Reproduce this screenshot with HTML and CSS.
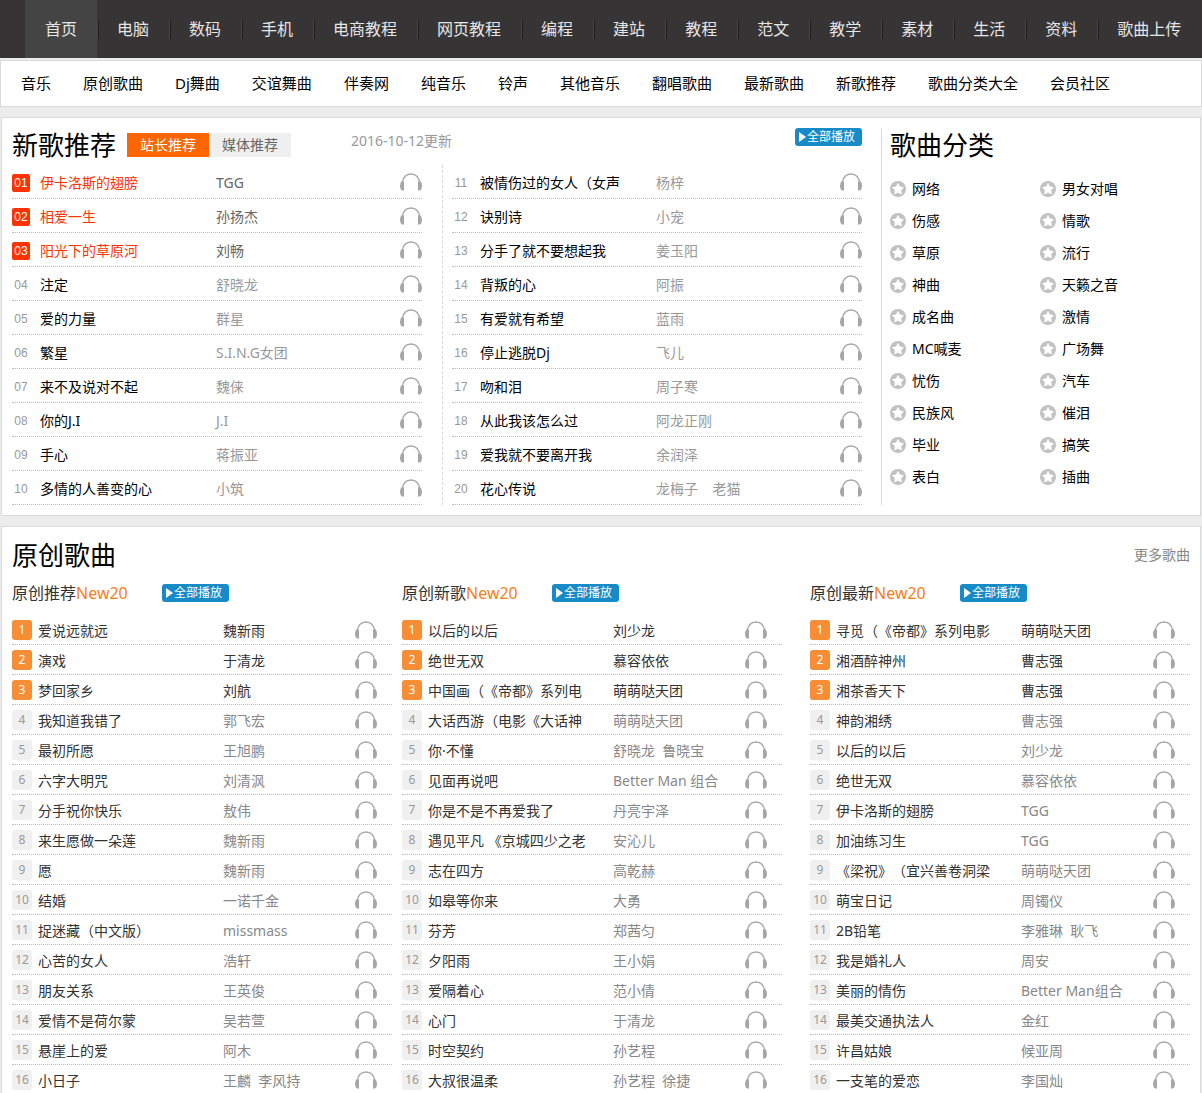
FILE: index.html
```html
<!DOCTYPE html>
<html lang="zh-CN">
<head>
    <meta charset="utf-8">
    <title>新歌推荐</title>
    <link rel="stylesheet" href="styles.css">
</head>
<body>

<!-- shared icons -->
<svg class="sprite" aria-hidden="true">
    <symbol id="ear" viewBox="0 0 22 18">
        <path d="M2.500 10C2.500 4.500 6 1 11 1S19.500 4.500 19.500 10" fill="none" stroke="#a8a8a8" stroke-width="1.400"/>
        <path d="M1.800 8H3.200Q4 8.500 4 10V17.500H2Q0 16.500 0 13Q0 9.500 1.800 8zM20.200 8H18.800Q18 8.500 18 10V17.500H20Q22 16.500 22 13Q22 9.500 20.200 8z" fill="#a6a6a6"/>
    </symbol>
    <symbol id="star" viewBox="0 0 16 16">
        <circle cx="8" cy="8" r="8" fill="#c1c1c1"/>
        <path d="M8 1.800L9.900 5.600L14 6.200L11.200 9.200L11.900 13.500L8 11.700L4.100 13.500L4.800 9.200L2 6.200L6.100 5.600z" fill="#fff"/>
    </symbol>
    <symbol id="play" viewBox="0 0 7 10">
        <path d="M0 0L7 5L0 10z" fill="#fff"/>
    </symbol>
</svg>

<nav class="topnav">
    <a class="on" href="#">首页</a>
    <a href="#">电脑</a>
    <a href="#">数码</a>
    <a href="#">手机</a>
    <a href="#">电商教程</a>
    <a href="#">网页教程</a>
    <a href="#">编程</a>
    <a href="#">建站</a>
    <a href="#">教程</a>
    <a href="#">范文</a>
    <a href="#">教学</a>
    <a href="#">素材</a>
    <a href="#">生活</a>
    <a href="#">资料</a>
    <a href="#">歌曲上传</a>
</nav>

<nav class="subnav">
    <a href="#">音乐</a>
    <a href="#">原创歌曲</a>
    <a href="#">Dj舞曲</a>
    <a href="#">交谊舞曲</a>
    <a href="#">伴奏网</a>
    <a href="#">纯音乐</a>
    <a href="#">铃声</a>
    <a href="#">其他音乐</a>
    <a href="#">翻唱歌曲</a>
    <a href="#">最新歌曲</a>
    <a href="#">新歌推荐</a>
    <a href="#">歌曲分类大全</a>
    <a href="#">会员社区</a>
</nav>

<!-- 新歌推荐 -->
<section class="panel newsong">
    <div class="newsong-main">
        <div class="newsong-head">
            <h2>新歌推荐</h2>
            <div class="tabs">
                <button class="on" type="button">站长推荐</button>
                <button type="button">媒体推荐</button>
            </div>
            <span class="date">2016-10-12更新</span>
            <button class="playall" type="button"><svg><use href="#play"/></svg>全部播放</button>
        </div>
        <div class="newsong-lists">
            <ul class="songs">
                <li class="top"><i>01</i><a href="#">伊卡洛斯的翅膀</a><span>TGG</span><svg><use href="#ear"/></svg></li>
                <li class="top"><i>02</i><a href="#">相爱一生</a><span>孙扬杰</span><svg><use href="#ear"/></svg></li>
                <li class="top"><i>03</i><a href="#">阳光下的草原河</a><span>刘畅</span><svg><use href="#ear"/></svg></li>
                <li><i>04</i><a href="#">注定</a><span>舒晓龙</span><svg><use href="#ear"/></svg></li>
                <li><i>05</i><a href="#">爱的力量</a><span>群星</span><svg><use href="#ear"/></svg></li>
                <li><i>06</i><a href="#">繁星</a><span>S.I.N.G女团</span><svg><use href="#ear"/></svg></li>
                <li><i>07</i><a href="#">来不及说对不起</a><span>魏俫</span><svg><use href="#ear"/></svg></li>
                <li><i>08</i><a href="#">你的J.I</a><span>J.I</span><svg><use href="#ear"/></svg></li>
                <li><i>09</i><a href="#">手心</a><span>蒋振亚</span><svg><use href="#ear"/></svg></li>
                <li><i>10</i><a href="#">多情的人善变的心</a><span>小筑</span><svg><use href="#ear"/></svg></li>
            </ul>
            <ul class="songs">
                <li><i>11</i><a href="#">被情伤过的女人（女声</a><span>杨梓</span><svg><use href="#ear"/></svg></li>
                <li><i>12</i><a href="#">诀别诗</a><span>小宠</span><svg><use href="#ear"/></svg></li>
                <li><i>13</i><a href="#">分手了就不要想起我</a><span>姜玉阳</span><svg><use href="#ear"/></svg></li>
                <li><i>14</i><a href="#">背叛的心</a><span>阿振</span><svg><use href="#ear"/></svg></li>
                <li><i>15</i><a href="#">有爱就有希望</a><span>蓝雨</span><svg><use href="#ear"/></svg></li>
                <li><i>16</i><a href="#">停止逃脱Dj</a><span>飞儿</span><svg><use href="#ear"/></svg></li>
                <li><i>17</i><a href="#">吻和泪</a><span>周子寒</span><svg><use href="#ear"/></svg></li>
                <li><i>18</i><a href="#">从此我该怎么过</a><span>阿龙正刚</span><svg><use href="#ear"/></svg></li>
                <li><i>19</i><a href="#">爱我就不要离开我</a><span>余润泽</span><svg><use href="#ear"/></svg></li>
                <li><i>20</i><a href="#">花心传说</a><span>龙梅子&nbsp;&nbsp;&nbsp;&nbsp;老猫</span><svg><use href="#ear"/></svg></li>
            </ul>
        </div>
    </div>
    <aside class="sorts">
        <h2>歌曲分类</h2>
        <ul>
            <li><a href="#"><svg><use href="#star"/></svg>网络</a></li>
            <li><a href="#"><svg><use href="#star"/></svg>男女对唱</a></li>
            <li><a href="#"><svg><use href="#star"/></svg>伤感</a></li>
            <li><a href="#"><svg><use href="#star"/></svg>情歌</a></li>
            <li><a href="#"><svg><use href="#star"/></svg>草原</a></li>
            <li><a href="#"><svg><use href="#star"/></svg>流行</a></li>
            <li><a href="#"><svg><use href="#star"/></svg>神曲</a></li>
            <li><a href="#"><svg><use href="#star"/></svg>天籁之音</a></li>
            <li><a href="#"><svg><use href="#star"/></svg>成名曲</a></li>
            <li><a href="#"><svg><use href="#star"/></svg>激情</a></li>
            <li><a href="#"><svg><use href="#star"/></svg>MC喊麦</a></li>
            <li><a href="#"><svg><use href="#star"/></svg>广场舞</a></li>
            <li><a href="#"><svg><use href="#star"/></svg>忧伤</a></li>
            <li><a href="#"><svg><use href="#star"/></svg>汽车</a></li>
            <li><a href="#"><svg><use href="#star"/></svg>民族风</a></li>
            <li><a href="#"><svg><use href="#star"/></svg>催泪</a></li>
            <li><a href="#"><svg><use href="#star"/></svg>毕业</a></li>
            <li><a href="#"><svg><use href="#star"/></svg>搞笑</a></li>
            <li><a href="#"><svg><use href="#star"/></svg>表白</a></li>
            <li><a href="#"><svg><use href="#star"/></svg>插曲</a></li>
        </ul>
    </aside>
</section>

<!-- 原创歌曲 -->
<section class="panel original">
    <div class="original-head">
        <h2>原创歌曲</h2>
        <a href="#">更多歌曲</a>
    </div>
    <div class="original-cols">
        <div class="col">
            <div class="col-head">
                <h3>原创推荐<em>New20</em></h3>
                <button class="playall" type="button"><svg><use href="#play"/></svg>全部播放</button>
            </div>
            <ul class="songs small">
                <li class="top"><i>1</i><a href="#">爱说远就远</a><span>魏新雨</span><svg><use href="#ear"/></svg></li>
                <li class="top"><i>2</i><a href="#">演戏</a><span>于清龙</span><svg><use href="#ear"/></svg></li>
                <li class="top"><i>3</i><a href="#">梦回家乡</a><span>刘航</span><svg><use href="#ear"/></svg></li>
                <li><i>4</i><a href="#">我知道我错了</a><span>郭飞宏</span><svg><use href="#ear"/></svg></li>
                <li><i>5</i><a href="#">最初所愿</a><span>王旭鹏</span><svg><use href="#ear"/></svg></li>
                <li><i>6</i><a href="#">六字大明咒</a><span>刘清沨</span><svg><use href="#ear"/></svg></li>
                <li><i>7</i><a href="#">分手祝你快乐</a><span>敖伟</span><svg><use href="#ear"/></svg></li>
                <li><i>8</i><a href="#">来生愿做一朵莲</a><span>魏新雨</span><svg><use href="#ear"/></svg></li>
                <li><i>9</i><a href="#">愿</a><span>魏新雨</span><svg><use href="#ear"/></svg></li>
                <li><i>10</i><a href="#">结婚</a><span>一诺千金</span><svg><use href="#ear"/></svg></li>
                <li><i>11</i><a href="#">捉迷藏（中文版）</a><span>missmass</span><svg><use href="#ear"/></svg></li>
                <li><i>12</i><a href="#">心苦的女人</a><span>浩轩</span><svg><use href="#ear"/></svg></li>
                <li><i>13</i><a href="#">朋友关系</a><span>王英俊</span><svg><use href="#ear"/></svg></li>
                <li><i>14</i><a href="#">爱情不是荷尔蒙</a><span>吴若萱</span><svg><use href="#ear"/></svg></li>
                <li><i>15</i><a href="#">悬崖上的爱</a><span>阿木</span><svg><use href="#ear"/></svg></li>
                <li><i>16</i><a href="#">小日子</a><span>王麟&nbsp;&nbsp;李风持</span><svg><use href="#ear"/></svg></li>
            </ul>
        </div>
        <div class="col">
            <div class="col-head">
                <h3>原创新歌<em>New20</em></h3>
                <button class="playall" type="button"><svg><use href="#play"/></svg>全部播放</button>
            </div>
            <ul class="songs small">
                <li class="top"><i>1</i><a href="#">以后的以后</a><span>刘少龙</span><svg><use href="#ear"/></svg></li>
                <li class="top"><i>2</i><a href="#">绝世无双</a><span>慕容依依</span><svg><use href="#ear"/></svg></li>
                <li class="top"><i>3</i><a href="#">中国画（《帝都》系列电</a><span>萌萌哒天团</span><svg><use href="#ear"/></svg></li>
                <li><i>4</i><a href="#">大话西游（电影《大话神</a><span>萌萌哒天团</span><svg><use href="#ear"/></svg></li>
                <li><i>5</i><a href="#">你·不懂</a><span>舒晓龙&nbsp;&nbsp;鲁晓宝</span><svg><use href="#ear"/></svg></li>
                <li><i>6</i><a href="#">见面再说吧</a><span>Better Man 组合</span><svg><use href="#ear"/></svg></li>
                <li><i>7</i><a href="#">你是不是不再爱我了</a><span>丹亮宇泽</span><svg><use href="#ear"/></svg></li>
                <li><i>8</i><a href="#">遇见平凡 《京城四少之老</a><span>安沁儿</span><svg><use href="#ear"/></svg></li>
                <li><i>9</i><a href="#">志在四方</a><span>高乾赫</span><svg><use href="#ear"/></svg></li>
                <li><i>10</i><a href="#">如皋等你来</a><span>大勇</span><svg><use href="#ear"/></svg></li>
                <li><i>11</i><a href="#">芬芳</a><span>郑茜匀</span><svg><use href="#ear"/></svg></li>
                <li><i>12</i><a href="#">夕阳雨</a><span>王小娟</span><svg><use href="#ear"/></svg></li>
                <li><i>13</i><a href="#">爱隔着心</a><span>范小倩</span><svg><use href="#ear"/></svg></li>
                <li><i>14</i><a href="#">心门</a><span>于清龙</span><svg><use href="#ear"/></svg></li>
                <li><i>15</i><a href="#">时空契约</a><span>孙艺程</span><svg><use href="#ear"/></svg></li>
                <li><i>16</i><a href="#">大叔很温柔</a><span>孙艺程&nbsp;&nbsp;徐捷</span><svg><use href="#ear"/></svg></li>
            </ul>
        </div>
        <div class="col">
            <div class="col-head">
                <h3>原创最新<em>New20</em></h3>
                <button class="playall" type="button"><svg><use href="#play"/></svg>全部播放</button>
            </div>
            <ul class="songs small">
                <li class="top"><i>1</i><a href="#">寻觅（《帝都》系列电影</a><span>萌萌哒天团</span><svg><use href="#ear"/></svg></li>
                <li class="top"><i>2</i><a href="#">湘酒醉神州</a><span>曹志强</span><svg><use href="#ear"/></svg></li>
                <li class="top"><i>3</i><a href="#">湘茶香天下</a><span>曹志强</span><svg><use href="#ear"/></svg></li>
                <li><i>4</i><a href="#">神韵湘绣</a><span>曹志强</span><svg><use href="#ear"/></svg></li>
                <li><i>5</i><a href="#">以后的以后</a><span>刘少龙</span><svg><use href="#ear"/></svg></li>
                <li><i>6</i><a href="#">绝世无双</a><span>慕容依依</span><svg><use href="#ear"/></svg></li>
                <li><i>7</i><a href="#">伊卡洛斯的翅膀</a><span>TGG</span><svg><use href="#ear"/></svg></li>
                <li><i>8</i><a href="#">加油练习生</a><span>TGG</span><svg><use href="#ear"/></svg></li>
                <li><i>9</i><a href="#">《梁祝》（宜兴善卷洞梁</a><span>萌萌哒天团</span><svg><use href="#ear"/></svg></li>
                <li><i>10</i><a href="#">萌宝日记</a><span>周镯仪</span><svg><use href="#ear"/></svg></li>
                <li><i>11</i><a href="#">2B铅笔</a><span>李雅琳&nbsp;&nbsp;耿飞</span><svg><use href="#ear"/></svg></li>
                <li><i>12</i><a href="#">我是婚礼人</a><span>周安</span><svg><use href="#ear"/></svg></li>
                <li><i>13</i><a href="#">美丽的情伤</a><span>Better Man组合</span><svg><use href="#ear"/></svg></li>
                <li><i>14</i><a href="#">最美交通执法人</a><span>金红</span><svg><use href="#ear"/></svg></li>
                <li><i>15</i><a href="#">许昌姑娘</a><span>候亚周</span><svg><use href="#ear"/></svg></li>
                <li><i>16</i><a href="#">一支笔的爱恋</a><span>李国灿</span><svg><use href="#ear"/></svg></li>
            </ul>
        </div>
    </div>
</section>

</body>
</html>
```

FILE: styles.css
```css
* {
    box-sizing: border-box;
    margin: 0;
    padding: 0;
}

body {
    font: 14px/20px "Noto Sans", "Noto Sans CJK SC", sans-serif;
    text-spacing-trim: space-all;
    background: #ececec;
    color: #000;
}

a {
    color: inherit;
    text-decoration: none;
}

ul {
    list-style: none;
}

i, em {
    font-style: normal;
}

button {
    border: 0;
    font-family: inherit;
    cursor: pointer;
}

h2 {
    font-size: 26px;
    font-weight: normal;
    line-height: 34px;
}

.sprite {
    display: none;
}

/* top bar */
.topnav {
    display: flex;
    height: 58px;
    padding-left: 25px;
    background: #373435;
    white-space: nowrap;
}

.topnav a {
    padding: 0 20px;
    font-size: 16px;
    line-height: 58px;
    color: #e6e6e6;
    background: linear-gradient(90deg, #454344 1px, #1e1c1d 1px) no-repeat 0 20px / 2px 19px;
}

.topnav a.on {
    background: #444;
}

.subnav {
    display: flex;
    gap: 32px;
    margin-top: 2px;
    padding: 0 20px;
    border: 1px solid #d9d9d9;
    background: #fff;
    font-size: 15px;
    line-height: 45px;
    white-space: nowrap;
}

.panel {
    margin: 10px 1px 0;
    padding: 10px;
    border: 1px solid #d9d9d9;
    background: #fff;
}

.playall {
    display: flex;
    align-items: center;
    gap: 1px;
    width: 67px;
    height: 18px;
    padding-left: 4px;
    border-radius: 3px;
    background: #168bc8;
    color: #fff;
    font-size: 12px;
    line-height: 18px;
    white-space: nowrap;
}

.playall svg {
    width: 7px;
    height: 10px;
}

/* new songs */
.newsong {
    display: flex;
}

.newsong-main {
    flex: 1;
    padding-right: 19px;
    border-right: 1px solid #d9d9d9;
}

.newsong-head {
    display: flex;
    align-items: flex-start;
    height: 37px;
}

.tabs {
    display: flex;
    margin: 5px 60px 0 11px;
}

.tabs button {
    width: 82px;
    height: 24px;
    background: #efefef;
    color: #666;
    font-size: 14px;
    line-height: 24px;
}

.tabs button.on {
    background: #f60;
    color: #fff;
}

.date {
    padding-top: 3px;
    color: #999;
}

.newsong-head .playall {
    margin-left: auto;
}

.newsong-lists {
    display: flex;
}

.newsong-lists .songs {
    flex: 1;
}

.newsong-lists .songs + .songs {
    margin-left: 20px;
    padding-left: 9px;
    border-left: 1px dashed #d9d9d9;
}

.songs li {
    display: grid;
    grid-template-columns: 18px 166px 1fr 22px;
    column-gap: 10px;
    align-items: center;
    height: 34px;
    padding-top: 2px;
    border-bottom: 1px dotted #bbb;
    white-space: nowrap;
}

.songs i {
    height: 18px;
    border-radius: 2px;
    color: #999;
    font: 12px/18px "Liberation Sans", sans-serif;
    text-align: center;
}

.songs span {
    color: #999;
}

.songs svg {
    width: 22px;
    height: 18px;
    margin-bottom: 2px;
}

.songs .top i {
    background: #ff3301;
    color: #fff;
}

.songs .top a {
    color: #ff3301;
}

.songs .top span {
    color: #666;
}

/* song types */
.sorts {
    width: 308px;
    padding-left: 8px;
}

.sorts ul {
    display: grid;
    grid-template-columns: 1fr 1fr;
    margin-top: 11px;
}

.sorts a {
    display: flex;
    align-items: center;
    gap: 6px;
    height: 32px;
}

.sorts svg {
    width: 16px;
    height: 16px;
}

/* original songs */
.original-head {
    display: flex;
    justify-content: space-between;
    align-items: center;
    height: 36px;
}

.original-head a {
    color: #888;
}

.original-cols {
    display: flex;
    gap: 10px;
}

.col {
    flex: 1;
}

.col:last-child {
    margin-left: 18px;
}

.col-head {
    display: flex;
    align-items: center;
    height: 40px;
    margin-bottom: 2px;
}

.col-head h3 {
    width: 150px;
    color: #333;
    font-size: 16px;
    font-weight: normal;
}

.col-head em {
    color: #f57f17;
}

.small li {
    grid-template-columns: 20px 179px 1fr 22px;
    column-gap: 6px;
    height: 30px;
    padding: 1px 15px 0 0;
}

.small i {
    height: 20px;
    border-radius: 3px;
    background: #f0f0f0;
    font: 12px/20px "Noto Sans", sans-serif;
}

.small a, .small span {
    padding-top: 2px;
}

.small a {
    color: #333;
}

.small span {
    color: #888;
}

.small svg {
    margin-bottom: 0;
}

.small .top i {
    background: #f78d34;
}

.small .top a, .small .top span {
    color: #333;
}
```
